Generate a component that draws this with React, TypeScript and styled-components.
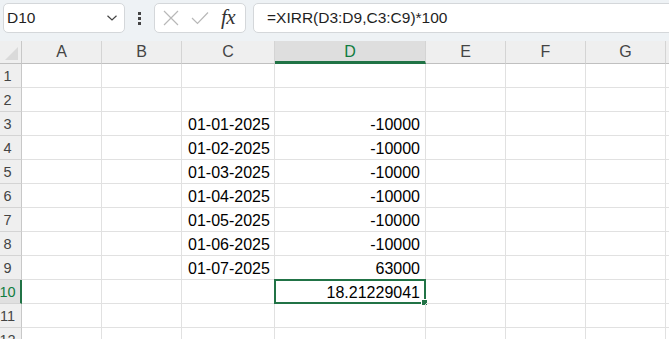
import React from 'react';
import styled, { createGlobalStyle } from 'styled-components';

const GlobalStyle = createGlobalStyle`
  html, body {
    margin: 0;
    padding: 0;
    background: #ffffff;
    overflow: hidden;
  }
  body {
    font-family: 'Liberation Sans', Arial, sans-serif;
  }
`;

// H is only a sliver at the right edge, so its letter is never visible
const COLUMNS = [
  { key: 'A', width: 80, label: 'A' },
  { key: 'B', width: 80, label: 'B' },
  { key: 'C', width: 93, label: 'C' },
  { key: 'D', width: 151, label: 'D' },
  { key: 'E', width: 80, label: 'E' },
  { key: 'F', width: 80, label: 'F' },
  { key: 'G', width: 80, label: 'G' },
  { key: 'H', width: 80, label: '' },
];

const ROW_COUNT = 12;
const SELECTED_COL = 'D';
const SELECTED_ROW = 10;

type CellValue = { text: string; align: 'left' | 'right' };

const DATA: Record<string, CellValue> = {
  C3: { text: '01-01-2025', align: 'left' },
  C4: { text: '01-02-2025', align: 'left' },
  C5: { text: '01-03-2025', align: 'left' },
  C6: { text: '01-04-2025', align: 'left' },
  C7: { text: '01-05-2025', align: 'left' },
  C8: { text: '01-06-2025', align: 'left' },
  C9: { text: '01-07-2025', align: 'left' },
  D3: { text: '-10000', align: 'right' },
  D4: { text: '-10000', align: 'right' },
  D5: { text: '-10000', align: 'right' },
  D6: { text: '-10000', align: 'right' },
  D7: { text: '-10000', align: 'right' },
  D8: { text: '-10000', align: 'right' },
  D9: { text: '63000', align: 'right' },
  D10: { text: '18.21229041', align: 'right' },
};

const Page = styled.div`
  width: 100vw;
  height: 100vh;
  display: flex;
  flex-direction: column;
  overflow: hidden;
`;

const FormulaBar = styled.div`
  height: 41px;
  flex: none;
  display: flex;
  align-items: flex-start;
  padding: 3px 0 0 3px;
  box-sizing: border-box;
  background: #eef2f5;
  overflow: hidden;
`;

const NameBox = styled.div`
  width: 122px;
  height: 30px;
  box-sizing: border-box;
  border: 1px solid #d4d7da;
  border-radius: 5px;
  background: #ffffff;
  display: flex;
  align-items: center;
  justify-content: space-between;
  padding: 0 6px 0 3px;
  font-size: 15.5px;
  color: #1f1f1f;
`;

const Grip = styled.div`
  width: 29px;
  height: 30px;
  display: flex;
  flex-direction: column;
  align-items: center;
  justify-content: center;
  gap: 2px;
`;

const GripDot = styled.span`
  width: 3px;
  height: 3px;
  background: #444444;
`;

const FunctionBox = styled.div`
  width: 92px;
  height: 30px;
  box-sizing: border-box;
  border: 1px solid #d4d7da;
  border-radius: 5px;
  background: #ffffff;
  display: flex;
  align-items: center;
  padding: 0 5px 0 8px;
  gap: 12px;
`;

const Fx = styled.span`
  font-family: 'Liberation Serif', 'Times New Roman', serif;
  font-style: italic;
  font-size: 21px;
  color: #333333;
  letter-spacing: -0.5px;
  margin-top: -2px;
`;

const FormulaInput = styled.div`
  flex: 1;
  height: 30px;
  margin-left: 7px;
  margin-right: -12px;
  box-sizing: border-box;
  border: 1px solid #d4d7da;
  border-radius: 5px;
  background: #ffffff;
  display: flex;
  align-items: center;
  padding-left: 13px;
  font-size: 15.5px;
  color: #1f1f1f;
  white-space: nowrap;
`;

const Sheet = styled.div`
  flex: 1;
  display: grid;
  grid-template-columns: 22px ${COLUMNS.map(c => `${c.width}px`).join(' ')};
  grid-auto-rows: 24px;
  grid-template-rows: 23px;
  align-content: start;
  overflow: hidden;
`;

const Corner = styled.div`
  position: relative;
  background: #efefef;
  border-right: 1px solid #c8c8c8;
  border-bottom: 1px solid #c0c0c0;
  box-sizing: border-box;
  overflow: hidden;

  &::after {
    content: '';
    position: absolute;
    right: 3px;
    bottom: 3px;
    width: 0;
    height: 0;
    border-left: 13px solid transparent;
    border-bottom: 13px solid #dadada;
  }
`;

const ColHeader = styled.div<{ $active: boolean }>`
  background: ${p => (p.$active ? '#dedede' : '#efefef')};
  border-right: 1px solid #d4d4d4;
  border-bottom: ${p => (p.$active ? '3px solid #217346' : '1px solid #c0c0c0')};
  box-sizing: border-box;
  display: flex;
  align-items: center;
  justify-content: center;
  padding-top: ${p => (p.$active ? '2px' : '0')};
  font-size: 16px;
  color: ${p => (p.$active ? '#107c41' : '#444444')};
`;

const RowHeader = styled.div<{ $active: boolean }>`
  background: ${p => (p.$active ? '#e0e0e0' : '#efefef')};
  border-right: ${p => (p.$active ? '2px solid #217346' : '1px solid #c8c8c8')};
  border-bottom: 1px solid #d4d4d4;
  box-sizing: border-box;
  display: flex;
  align-items: center;
  justify-content: center;
  padding-right: ${p => (p.$active ? '5px' : '6px')};
  padding-top: 1px;
  font-size: 14.5px;
  color: ${p => (p.$active ? '#107c41' : '#444444')};
  overflow: hidden;
`;

const Cell = styled.div<{ $align: 'left' | 'right' }>`
  position: relative;
  border-right: 1px solid #e1e1e1;
  border-bottom: 1px solid #e1e1e1;
  box-sizing: border-box;
  display: flex;
  align-items: center;
  justify-content: ${p => (p.$align === 'right' ? 'flex-end' : 'flex-start')};
  padding: 2px 5px 0 6px;
  font-size: 16px;
  color: #000000;
  white-space: nowrap;
`;

const Selection = styled.div`
  position: absolute;
  left: -1px;
  top: -1px;
  right: -1px;
  bottom: -1px;
  border: 2px solid #217346;
  pointer-events: none;

  &::after {
    content: '';
    position: absolute;
    right: -4px;
    bottom: -4px;
    width: 5px;
    height: 5px;
    background: #217346;
    border: 1px solid #ffffff;
  }
`;

function ChevronIcon() {
  return (
    <svg width="12" height="8" viewBox="0 0 12 8">
      <path d="M1.5 1.8 L6 6 L10.5 1.8" fill="none" stroke="#444" strokeWidth="1.2" />
    </svg>
  );
}

function CancelIcon() {
  return (
    <svg width="16" height="16" viewBox="0 0 16 16">
      <path d="M1 1 L15 15 M15 1 L1 15" stroke="#b8b8b8" strokeWidth="1.2" fill="none" />
    </svg>
  );
}

function EnterIcon() {
  return (
    <svg width="18" height="14" viewBox="0 0 18 14">
      <path d="M1 7 L6.5 12.5 L17 1.5" stroke="#b8b8b8" strokeWidth="1.2" fill="none" />
    </svg>
  );
}

export default function App() {
  const rows = Array.from({ length: ROW_COUNT }, (_, i) => i + 1);

  return (
    <Page>
      <GlobalStyle />
      <FormulaBar>
        <NameBox>
          <span>D10</span>
          <ChevronIcon />
        </NameBox>
        <Grip>
          <GripDot />
          <GripDot />
          <GripDot />
        </Grip>
        <FunctionBox>
          <CancelIcon />
          <EnterIcon />
          <Fx>fx</Fx>
        </FunctionBox>
        <FormulaInput>=XIRR(D3:D9,C3:C9)*100</FormulaInput>
      </FormulaBar>
      <Sheet>
        <Corner />
        {COLUMNS.map(c => (
          <ColHeader key={c.key} $active={c.key === SELECTED_COL}>
            {c.label}
          </ColHeader>
        ))}
        {rows.map(r => (
          <React.Fragment key={r}>
            <RowHeader $active={r === SELECTED_ROW}>{r}</RowHeader>
            {COLUMNS.map(c => {
              const id = `${c.key}${r}`;
              const value = DATA[id];
              return (
                <Cell key={id} $align={value ? value.align : 'left'}>
                  {value ? value.text : null}
                  {c.key === SELECTED_COL && r === SELECTED_ROW && <Selection />}
                </Cell>
              );
            })}
          </React.Fragment>
        ))}
      </Sheet>
    </Page>
  );
}
